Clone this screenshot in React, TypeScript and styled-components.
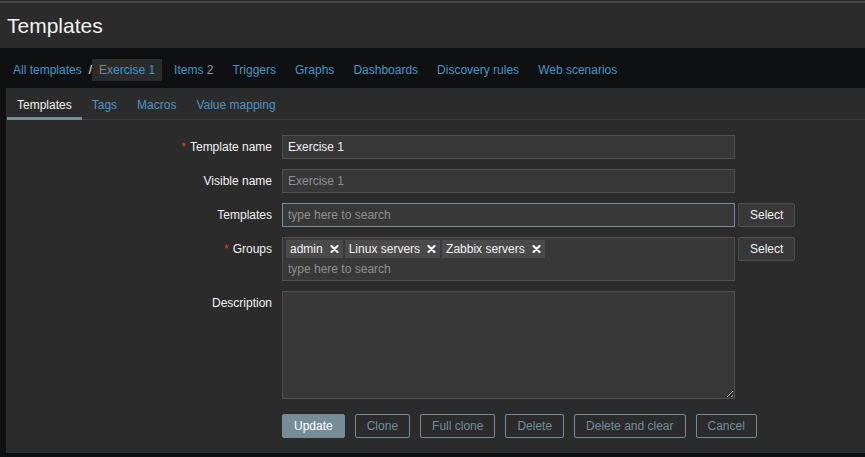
import React from 'react';
import styled, { createGlobalStyle } from 'styled-components';

const GlobalStyle = createGlobalStyle`
  html, body { margin: 0; padding: 0; background: #0e1012; }
  body {
    font-family: "Liberation Sans", Arial, sans-serif;
    font-size: 12px;
    color: #f2f2f2;
  }
  * { box-sizing: border-box; }
`;

const Page = styled.div`
  width: 865px;
  height: 457px;
  overflow: hidden;
  display: flex;
  flex-direction: column;
  background: #0e1012;
`;

const Header = styled.header`
  height: 48px;
  padding: 14px 7px 10px;
  background: linear-gradient(#2b2b2b 0 1px, #474747 1px 3px, #2b2b2b 3px);
`;

const Title = styled.h1`
  margin: 0;
  font-size: 21px;
  font-weight: normal;
  line-height: 24px;
  color: #f2f2f2;
`;

const Nav = styled.nav`
  height: 40px;
  padding: 11px 6px 7px;
  display: flex;
  align-items: center;
  gap: 5px;
`;

const Breadcrumbs = styled.div`
  display: flex;
  align-items: center;
`;

const Slash = styled.span`
  color: #f2f2f2;
  line-height: 22px;
`;

const NavLink = styled.a<{ $current?: boolean }>`
  display: block;
  height: 22px;
  line-height: 22px;
  padding: 0 7px;
  color: #4796c4;
  text-decoration: none;
  white-space: nowrap;
  background: ${(p) => (p.$current ? '#2b2b2b' : 'transparent')};
`;

const Count = styled.span`
  color: #9a9a9a;
`;

const Panel = styled.main`
  flex: 1;
  margin: 0 0 4px 6px;
  background: #2b2b2b;
  display: flex;
  flex-direction: column;
`;

const TabList = styled.div`
  display: flex;
  padding: 0 1px;
  border-bottom: 1px solid #3c3c3c;
`;

const Tab = styled.a<{ $active?: boolean }>`
  display: block;
  padding: 10px 10px 5px;
  line-height: 14px;
  margin-bottom: -1px;
  border-bottom: 3px solid ${(p) => (p.$active ? '#768d99' : 'transparent')};
  color: ${(p) => (p.$active ? '#f2f2f2' : '#4796c4')};
  text-decoration: none;
  white-space: nowrap;
`;

const Form = styled.form`
  display: grid;
  grid-template-columns: 266px 1fr;
  column-gap: 10px;
  row-gap: 10px;
  padding-top: 15px;
  margin: 0;
`;

const Label = styled.label`
  text-align: right;
  line-height: 24px;
  color: #f2f2f2;
  white-space: nowrap;
`;

const Asterisk = styled.span`
  color: #e33734;
  margin-right: 4px;
`;

const Field = styled.div`
  display: flex;
  align-items: flex-start;
  gap: 3px;
`;

const TextInput = styled.input<{ $focus?: boolean }>`
  width: 453px;
  height: 24px;
  padding: 0 5px;
  background: #383838;
  border: 1px solid ${(p) => (p.$focus ? '#768d99' : '#4f4f4f')};
  color: #f2f2f2;
  font: inherit;
  outline: none;
  &::placeholder { color: #8e8e8e; }
`;

const MultiSelect = styled.div`
  width: 453px;
  height: 44px;
  padding: 2px 3px 0;
  background: #383838;
  border: 1px solid #4f4f4f;
  display: flex;
  flex-direction: column;
`;

const TagRow = styled.div`
  display: flex;
  gap: 2px;
`;

const Tag = styled.span`
  display: flex;
  align-items: center;
  height: 18px;
  padding: 0 4px;
  background: #4a4a4a;
  color: #f2f2f2;
  white-space: nowrap;
`;

const TagRemove = styled.svg`
  width: 9px;
  height: 8px;
  margin-left: 7px;
`;

const SearchInput = styled.input`
  height: 22px;
  padding: 0 2px;
  background: transparent;
  border: none;
  color: #f2f2f2;
  font: inherit;
  outline: none;
  &::placeholder { color: #8e8e8e; }
`;

const TextArea = styled.textarea`
  width: 453px;
  height: 108px;
  background: #383838;
  border: 1px solid #4f4f4f;
  color: #f2f2f2;
  font: inherit;
  resize: vertical;
  outline: none;
  display: block;
`;

const GreyButton = styled.button`
  height: 24px;
  padding: 0 11px;
  background: #383838;
  border: 1px solid #4f4f4f;
  color: #f2f2f2;
  font: inherit;
  border-radius: 2px;
`;

const Buttons = styled.div`
  grid-column: 2;
  display: flex;
  gap: 10px;
  margin-top: 5px;
`;

const Button = styled.button<{ $primary?: boolean }>`
  height: 24px;
  padding: 0 11px;
  border: 1px solid #768d99;
  border-radius: 2px;
  background: ${(p) => (p.$primary ? '#768d99' : 'transparent')};
  color: ${(p) => (p.$primary ? '#ffffff' : '#768d99')};
  font: inherit;
  white-space: nowrap;
`;

const RemoveIcon = () => (
  <TagRemove viewBox="0 0 9 8">
    <path d="M1.5 1 L7.5 7 M7.5 1 L1.5 7" stroke="#f2f2f2" strokeWidth="2.2" strokeLinecap="round" />
  </TagRemove>
);

const groups = ['admin', 'Linux servers', 'Zabbix servers'];

export default function App() {
  return (
    <Page>
      <GlobalStyle />
      <Header>
        <Title>Templates</Title>
      </Header>
      <Nav>
        <Breadcrumbs>
          <NavLink>All templates</NavLink>
          <Slash>/</Slash>
          <NavLink $current>Exercise 1</NavLink>
        </Breadcrumbs>
        <NavLink>
          Items <Count>2</Count>
        </NavLink>
        <NavLink>Triggers</NavLink>
        <NavLink>Graphs</NavLink>
        <NavLink>Dashboards</NavLink>
        <NavLink>Discovery rules</NavLink>
        <NavLink>Web scenarios</NavLink>
      </Nav>
      <Panel>
        <TabList>
          <Tab $active>Templates</Tab>
          <Tab>Tags</Tab>
          <Tab>Macros</Tab>
          <Tab>Value mapping</Tab>
        </TabList>
        <Form onSubmit={(e) => e.preventDefault()}>
          <Label>
            <Asterisk>*</Asterisk>Template name
          </Label>
          <Field>
            <TextInput defaultValue="Exercise 1" />
          </Field>

          <Label>Visible name</Label>
          <Field>
            <TextInput placeholder="Exercise 1" />
          </Field>

          <Label>Templates</Label>
          <Field>
            <TextInput $focus placeholder="type here to search" />
            <GreyButton type="button">Select</GreyButton>
          </Field>

          <Label>
            <Asterisk>*</Asterisk>Groups
          </Label>
          <Field>
            <MultiSelect>
              <TagRow>
                {groups.map((g) => (
                  <Tag key={g}>
                    {g}
                    <RemoveIcon />
                  </Tag>
                ))}
              </TagRow>
              <SearchInput placeholder="type here to search" />
            </MultiSelect>
            <GreyButton type="button">Select</GreyButton>
          </Field>

          <Label>Description</Label>
          <Field>
            <TextArea />
          </Field>

          <Buttons>
            <Button $primary type="button">Update</Button>
            <Button type="button">Clone</Button>
            <Button type="button">Full clone</Button>
            <Button type="button">Delete</Button>
            <Button type="button">Delete and clear</Button>
            <Button type="button">Cancel</Button>
          </Buttons>
        </Form>
      </Panel>
    </Page>
  );
}
